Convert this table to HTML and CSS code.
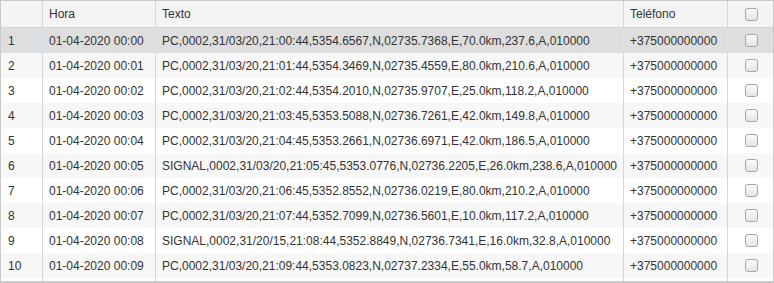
FILE: index.html
```html
<!DOCTYPE html>
<html>
<head>
<meta charset="utf-8">
<link rel="stylesheet" href="styles.css">
</head>
<body>
<div class="grid">
  <div class="row head">
    <div class="cell num"></div>
    <div class="cell">Hora</div>
    <div class="cell">Texto</div>
    <div class="cell">Teléfono</div>
    <div class="cell chk"><span class="box"></span></div>
  </div>
  <div class="row sel">
    <div class="cell num">1</div><div class="cell">01-04-2020 00:00</div><div class="cell">PC,0002,31/03/20,21:00:44,5354.6567,N,02735.7368,E,70.0km,237.6,A,010000</div><div class="cell">+375000000000</div><div class="cell chk"><span class="box"></span></div>
  </div>
  <div class="row alt">
    <div class="cell num">2</div><div class="cell">01-04-2020 00:01</div><div class="cell">PC,0002,31/03/20,21:01:44,5354.3469,N,02735.4559,E,80.0km,210.6,A,010000</div><div class="cell">+375000000000</div><div class="cell chk"><span class="box"></span></div>
  </div>
  <div class="row">
    <div class="cell num">3</div><div class="cell">01-04-2020 00:02</div><div class="cell">PC,0002,31/03/20,21:02:44,5354.2010,N,02735.9707,E,25.0km,118.2,A,010000</div><div class="cell">+375000000000</div><div class="cell chk"><span class="box"></span></div>
  </div>
  <div class="row alt">
    <div class="cell num">4</div><div class="cell">01-04-2020 00:03</div><div class="cell">PC,0002,31/03/20,21:03:45,5353.5088,N,02736.7261,E,42.0km,149.8,A,010000</div><div class="cell">+375000000000</div><div class="cell chk"><span class="box"></span></div>
  </div>
  <div class="row">
    <div class="cell num">5</div><div class="cell">01-04-2020 00:04</div><div class="cell">PC,0002,31/03/20,21:04:45,5353.2661,N,02736.6971,E,42.0km,186.5,A,010000</div><div class="cell">+375000000000</div><div class="cell chk"><span class="box"></span></div>
  </div>
  <div class="row alt">
    <div class="cell num">6</div><div class="cell">01-04-2020 00:05</div><div class="cell">SIGNAL,0002,31/03/20,21:05:45,5353.0776,N,02736.2205,E,26.0km,238.6,A,010000</div><div class="cell">+375000000000</div><div class="cell chk"><span class="box"></span></div>
  </div>
  <div class="row">
    <div class="cell num">7</div><div class="cell">01-04-2020 00:06</div><div class="cell">PC,0002,31/03/20,21:06:45,5352.8552,N,02736.0219,E,80.0km,210.2,A,010000</div><div class="cell">+375000000000</div><div class="cell chk"><span class="box"></span></div>
  </div>
  <div class="row alt">
    <div class="cell num">8</div><div class="cell">01-04-2020 00:07</div><div class="cell">PC,0002,31/03/20,21:07:44,5352.7099,N,02736.5601,E,10.0km,117.2,A,010000</div><div class="cell">+375000000000</div><div class="cell chk"><span class="box"></span></div>
  </div>
  <div class="row">
    <div class="cell num">9</div><div class="cell">01-04-2020 00:08</div><div class="cell">SIGNAL,0002,31/20/15,21:08:44,5352.8849,N,02736.7341,E,16.0km,32.8,A,010000</div><div class="cell">+375000000000</div><div class="cell chk"><span class="box"></span></div>
  </div>
  <div class="row alt">
    <div class="cell num">10</div><div class="cell">01-04-2020 00:09</div><div class="cell">PC,0002,31/03/20,21:09:44,5353.0823,N,02737.2334,E,55.0km,58.7,A,010000</div><div class="cell">+375000000000</div><div class="cell chk"><span class="box"></span></div>
  </div>
  <div class="row filler">
    <div class="cell num"></div><div class="cell"></div><div class="cell"></div><div class="cell"></div><div class="cell chk"></div>
  </div>
</div>
</body>
</html>
```
FILE: styles.css
```css
html, body {
  margin: 0;
  padding: 0;
  background: #ffffff;
}
.grid {
  width: 774px;
  height: 283px;
  box-sizing: border-box;
  border: 1px solid #c9c9c9;
  border-bottom-width: 2px;
  overflow: hidden;
  font-family: "Liberation Sans", Arial, sans-serif;
  font-size: 12px;
  color: #333333;
  display: flex;
  flex-direction: column;
}
.row {
  display: grid;
  grid-template-columns: 42px 113px 468px 104px 45px;
  height: 25px;
  background: #ffffff;
}
.row.head {
  height: 26px;
  background: #f4f4f4;
  border-bottom: 1px solid #d3d3d3;
}
.row.alt {
  background: #f7f7f7;
}
.row.sel {
  background: #dedede;
}
.row.filler {
  flex: 1;
  height: auto;
}
.cell {
  box-sizing: border-box;
  border-right: 1px solid #d6d6d6;
  padding: 0 0 0 6px;
  display: flex;
  align-items: center;
  white-space: nowrap;
  overflow: hidden;
}
.cell.num {
  padding-left: 7px;
}
.cell.chk {
  border-right: none;
  padding: 0;
  justify-content: center;
}
.row.sel .cell {
  border-right-color: #cfe5f6;
}
.row.sel .cell.chk {
  border-right: none;
}
.box {
  width: 11px;
  height: 11px;
  border: 1px solid #a6a6a6;
  border-radius: 3px;
  background: linear-gradient(#fbfbfb, #e4e4e4);
  margin-left: 1px;
}
```
